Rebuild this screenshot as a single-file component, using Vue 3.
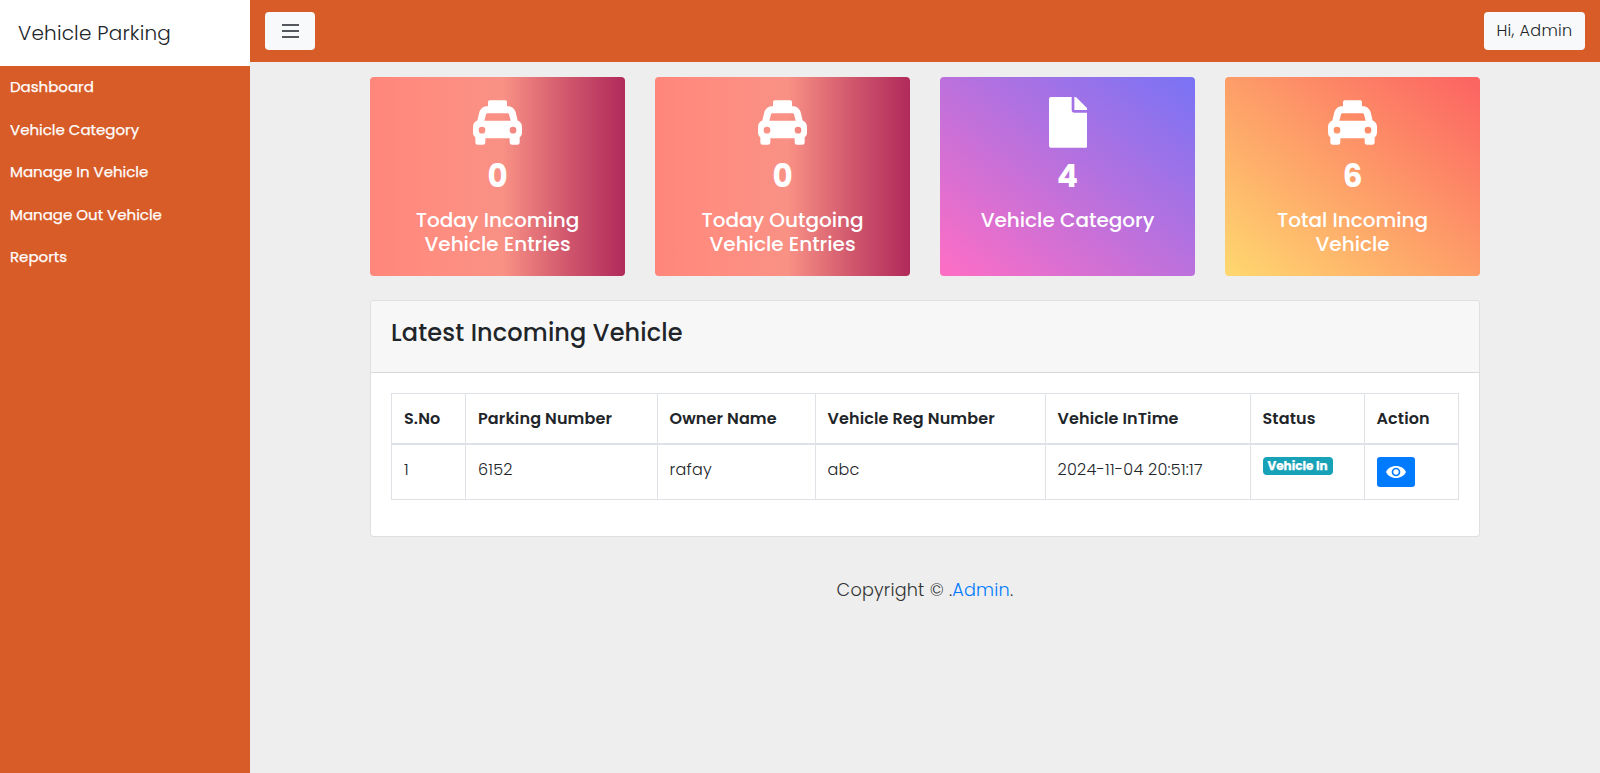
<script setup>
const menu = ['Dashboard', 'Vehicle Category', 'Manage In Vehicle', 'Manage Out Vehicle', 'Reports']

const stats = [
  { icon: 'taxi', value: 0, label: 'Today Incoming Vehicle Entries', tone: 'coral' },
  { icon: 'taxi', value: 0, label: 'Today Outgoing Vehicle Entries', tone: 'coral' },
  { icon: 'file', value: 4, label: 'Vehicle Category', tone: 'violet' },
  { icon: 'taxi', value: 6, label: 'Total Incoming Vehicle', tone: 'amber' },
]

const columns = [
  { title: 'S.No', cls: 'c-no' },
  { title: 'Parking Number', cls: 'c-park' },
  { title: 'Owner Name', cls: 'c-owner' },
  { title: 'Vehicle Reg Number', cls: 'c-reg' },
  { title: 'Vehicle InTime', cls: 'c-time' },
  { title: 'Status', cls: 'c-status' },
  { title: 'Action', cls: 'c-action' },
]

const rows = [
  { no: 1, parking: '6152', owner: 'rafay', reg: 'abc', time: '2024-11-04 20:51:17', status: 'Vehicle In' },
]
</script>

<template>
  <div class="layout">
    <aside class="sidebar">
      <div class="brand">Vehicle Parking</div>
      <nav>
        <a v-for="item in menu" :key="item" class="menu-item">{{ item }}</a>
      </nav>
    </aside>

    <div class="main">
      <header class="topbar">
        <button class="btn-light toggle" aria-label="Toggle menu">
          <svg width="17" height="14" viewBox="0 0 17 14">
            <path d="M0 0h17v2H0zM0 6h17v2H0zM0 12h17v2H0z" fill="#55575f" />
          </svg>
        </button>
        <button class="btn-light user">Hi, Admin</button>
      </header>

      <main class="content">
        <section class="stats">
          <article v-for="(s, i) in stats" :key="i" class="stat" :class="s.tone">
            <div class="stat-icon">
              <svg v-if="s.icon === 'taxi'" width="49" height="45" viewBox="0 0 147 134">
                <path
                  fill="#fff"
                  fill-rule="evenodd"
                  d="M50 0H97Q102 0 102 6V18H105C117 18 125 26 128 36L134 61C142 64 147 71 147 80V97C147 104 144 109 140 111V127Q140 134 133 134H117Q110 134 110 127V114H37V127Q37 134 30 134H14Q7 134 7 127V111C3 109 0 104 0 97V80C0 71 5 64 13 61L19 36C22 26 30 18 42 18H45V6Q45 0 50 0ZM44 39C41 39 40 40 39 43L34 62H113L108 43C107 40 106 39 103 39ZM27 80A10 10 0 1 0 27 100A10 10 0 1 0 27 80ZM120 80A10 10 0 1 0 120 100A10 10 0 1 0 120 80Z"
                />
              </svg>
              <svg v-else class="file" width="38.7" height="50.7" viewBox="0 0 116 152">
                <path
                  fill="#fff"
                  d="M6 0H68V40Q68 47 75 47H116V146Q116 152 110 152H6Q0 152 0 146V6Q0 0 6 0ZM76 0H78Q81 0 83 2L114 33Q116 35 116 38V39H76Z"
                />
              </svg>
            </div>
            <div class="stat-value">{{ s.value }}</div>
            <div class="stat-label">{{ s.label }}</div>
          </article>
        </section>

        <section class="panel">
          <div class="panel-head">Latest Incoming Vehicle</div>
          <div class="panel-body">
            <table>
              <thead>
                <tr>
                  <th v-for="c in columns" :key="c.title" :class="c.cls">{{ c.title }}</th>
                </tr>
              </thead>
              <tbody>
                <tr v-for="r in rows" :key="r.no">
                  <td>{{ r.no }}</td>
                  <td>{{ r.parking }}</td>
                  <td>{{ r.owner }}</td>
                  <td>{{ r.reg }}</td>
                  <td>{{ r.time }}</td>
                  <td><span class="badge">{{ r.status }}</span></td>
                  <td>
                    <button class="view" aria-label="View">
                      <svg width="20" height="12" viewBox="0 0 60 36">
                        <path
                          fill="#fff"
                          fill-rule="evenodd"
                          d="M30 0C16 0 5 7 0 18C5 29 16 36 30 36S55 29 60 18C55 7 44 0 30 0ZM30 5A13 13 0 1 1 30 31A13 13 0 1 1 30 5Z"
                        />
                        <circle cx="30" cy="18" r="8" fill="#fff" />
                      </svg>
                    </button>
                  </td>
                </tr>
              </tbody>
            </table>
          </div>
        </section>

        <footer class="footer">Copyright © .<a>Admin</a>.</footer>
      </main>
    </div>
  </div>
</template>

<style>
body {
  background: #eee;
}
</style>

<style scoped>
* {
  box-sizing: border-box;
}
.layout {
  display: flex;
  height: 773px;
  overflow: hidden;
  background: #eee;
  color: #212529;
  font: 400 16px/1.5 Poppins, Inter, sans-serif;
}
.sidebar {
  width: 250px;
  flex: none;
  background: #d85c27;
}
.brand {
  height: 66px;
  padding-left: 18px;
  background: #fff;
  color: #212529;
  font-size: 20px;
  font-weight: 300;
  letter-spacing: 0.2px;
  line-height: 66px;
}
.menu-item {
  display: block;
  padding: 10px;
  color: #fff;
  font-size: 15px;
  line-height: 22.5px;
  -webkit-text-stroke: 0.25px #fff;
}
.main {
  flex: 1;
}
.topbar {
  display: flex;
  justify-content: space-between;
  align-items: center;
  height: 62px;
  padding: 0 15px;
  background: #d85c27;
}
.btn-light {
  display: flex;
  align-items: center;
  justify-content: center;
  height: 38px;
  padding: 0;
  border: 0;
  border-radius: 4px;
  background: #f8f9fa;
  color: #212529;
  font: inherit;
}
.toggle {
  width: 50px;
}
.user {
  width: 101px;
  font-weight: 300;
  letter-spacing: 0.35px;
}
.content {
  width: 1110px;
  margin: 15px 0 0 120px;
}
.stats {
  display: grid;
  grid-template-columns: repeat(4, 255px);
  gap: 30px;
}
.stat {
  height: 199px;
  padding: 20px;
  border-radius: 4px;
  color: #fff;
  text-align: center;
}
.coral {
  background: linear-gradient(to right, #ff867a 0%, #ff8c7f 21%, #f99185 52%, #cf556c 78%, #b12a5b 100%);
}
.violet {
  background: linear-gradient(to top right, #ff6ec4, #7873f5);
}
.amber {
  background: linear-gradient(to top right, #ffd86f, #fc6262);
}
.stat-icon {
  display: flex;
  align-items: center;
  justify-content: center;
  height: 51px;
}
.file {
  margin-left: 1px;
}
.stat-value {
  margin-top: 9px;
  font-size: 31px;
  font-weight: 700;
  line-height: 39px;
}
.stat-label {
  margin-top: 12px;
  font-size: 20px;
  font-weight: 500;
  line-height: 24px;
}
.panel {
  margin-top: 24px;
  height: 237px;
  border: 1px solid rgba(0, 0, 0, 0.125);
  border-radius: 4px;
  background: #fff;
}
.panel-head {
  height: 72px;
  padding: 17px 20px 0;
  border-bottom: 1px solid rgba(0, 0, 0, 0.125);
  border-radius: 3px 3px 0 0;
  background: #f7f7f7;
  font-size: 24px;
  font-weight: 500;
  letter-spacing: 0.14px;
  line-height: 29px;
}
.panel-body {
  padding: 20px;
}
table {
  width: 1068px;
  table-layout: fixed;
  border-collapse: collapse;
}
th,
td {
  padding: 12px;
  border: 1px solid #dee2e6;
  text-align: left;
  vertical-align: top;
  line-height: 25px;
}
th {
  border-bottom-width: 2px;
  font-weight: 600;
  letter-spacing: 0.12px;
}
td {
  height: 55px;
  font-weight: 300;
  letter-spacing: 0.24px;
}
.c-no { width: 74px; }
.c-park { width: 191.5px; }
.c-owner { width: 158px; }
.c-reg { width: 230px; }
.c-time { width: 205px; }
.c-status { width: 114px; }
.badge {
  display: block;
  width: 70px;
  height: 18px;
  border-radius: 4px;
  background: #17a2b8;
  color: #fff;
  font-size: 12px;
  font-weight: 700;
  letter-spacing: 0;
  line-height: 18px;
  text-align: center;
  white-space: nowrap;
  -webkit-text-stroke: 0.25px #fff;
}
.view {
  display: flex;
  align-items: center;
  justify-content: center;
  width: 38px;
  height: 30px;
  padding: 0;
  border: 0;
  border-radius: 3px;
  background: #007bff;
}
.footer {
  margin-top: 40px;
  color: #333;
  font-size: 17.6px;
  font-weight: 300;
  letter-spacing: 0.22px;
  line-height: 26px;
  text-align: center;
}
.footer a {
  color: #007bff;
}
</style>
